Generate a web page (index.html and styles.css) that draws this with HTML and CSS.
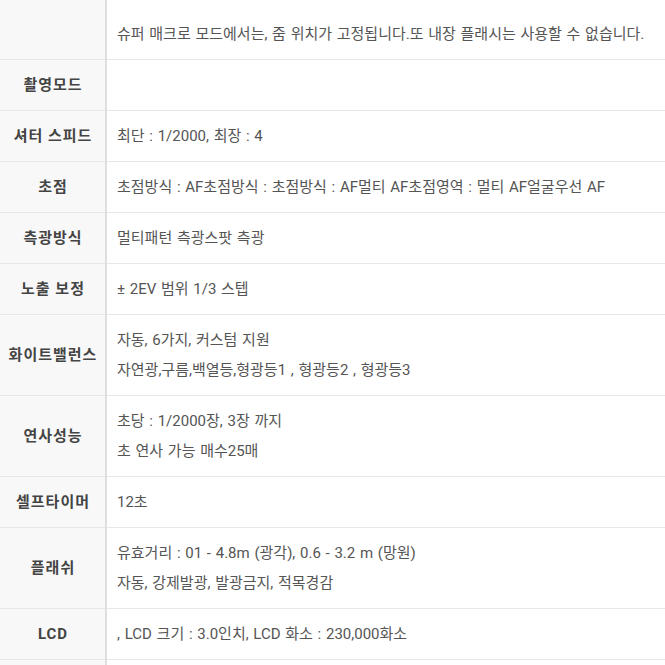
FILE: index.html
```html
<!DOCTYPE html>
<html lang="ko">
<head>
<meta charset="utf-8">
<link rel="stylesheet" href="styles.css">
</head>
<body>
<table class="spec">
  <tr class="first">
    <th></th>
    <td>슈퍼 매크로 모드에서는, 줌 위치가 고정됩니다.또 내장 플래시는 사용할 수 없습니다.</td>
  </tr>
  <tr>
    <th>촬영모드</th>
    <td></td>
  </tr>
  <tr>
    <th>셔터 스피드</th>
    <td>최단 : 1/2000, 최장 : 4</td>
  </tr>
  <tr>
    <th>초점</th>
    <td>초점방식 : AF초점방식 : 초점방식 : AF멀티 AF초점영역 : 멀티 AF얼굴우선 AF</td>
  </tr>
  <tr>
    <th>측광방식</th>
    <td>멀티패턴 측광스팟 측광</td>
  </tr>
  <tr>
    <th>노출 보정</th>
    <td>± 2EV 범위 1/3 스텝</td>
  </tr>
  <tr>
    <th>화이트밸런스</th>
    <td><p>자동, 6가지, 커스텀 지원</p><p>자연광,구름,백열등,형광등1 , 형광등2 , 형광등3</p></td>
  </tr>
  <tr>
    <th>연사성능</th>
    <td><p>초당 : 1/2000장, 3장 까지</p><p>초 연사 가능 매수25매</p></td>
  </tr>
  <tr>
    <th>셀프타이머</th>
    <td>12초</td>
  </tr>
  <tr>
    <th>플래쉬</th>
    <td><p>유효거리 : 01 - 4.8m (광각), 0.6 - 3.2 m (망원)</p><p>자동, 강제발광, 발광금지, 적목경감</p></td>
  </tr>
  <tr>
    <th>LCD</th>
    <td>, LCD 크기 : 3.0인치, LCD 화소 : 230,000화소</td>
  </tr>
  <tr>
    <th></th>
    <td></td>
  </tr>
</table>
</body>
</html>
```
FILE: styles.css
```css
html, body {
  margin: 0;
  padding: 0;
  background: #ffffff;
}
body {
  font-family: Roboto, "Noto Sans CJK KR", sans-serif;
  font-size: 15px;
  color: #555555;
  overflow: hidden;
}
.spec {
  width: 665px;
  border-collapse: collapse;
  table-layout: fixed;
}
.spec th {
  width: 104px;
  background: #f8f8f8;
  border-right: 2px solid #dedede;
  border-bottom: 1px solid #e8e8e8;
  font-weight: bold;
  color: #444444;
  text-align: center;
  vertical-align: middle;
  padding: 10px 0 10px 1px;
  height: 30px;
  line-height: 30px;
  letter-spacing: 1px;
  white-space: nowrap;
}
.spec td {
  border-bottom: 1px solid #e8e8e8;
  padding: 10px 0 10px 10px;
  height: 30px;
  line-height: 30px;
  word-spacing: 1px;
  vertical-align: middle;
  white-space: nowrap;
  overflow: hidden;
}
.spec td p {
  margin: 0;
}
.spec .first th,
.spec .first td {
  padding-top: 19px;
}
```
